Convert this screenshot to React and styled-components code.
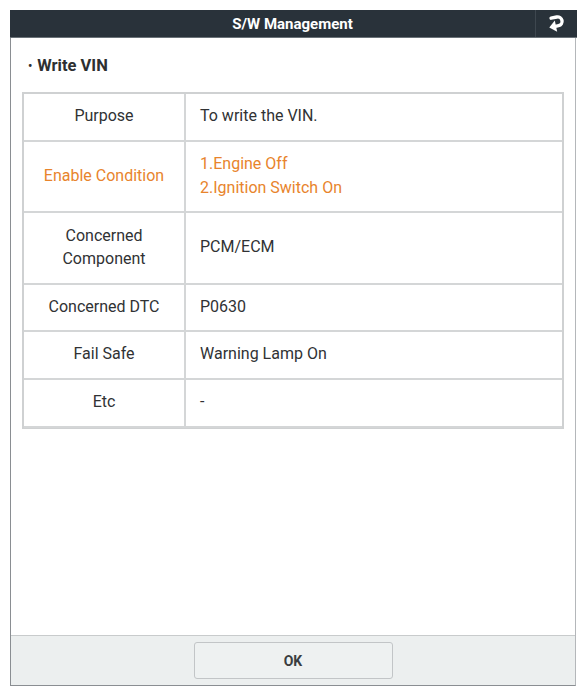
import React from "react";
import styled, { createGlobalStyle } from "styled-components";

const Global = createGlobalStyle`
  html, body { margin: 0; padding: 0; background: #ffffff; }
  body { font-family: Roboto, "Noto Sans", "Liberation Sans", sans-serif; }
`;

const Page = styled.div`
  padding: 10px 0 0 10px;
`;

const Frame = styled.div`
  width: 566px;
  height: 676px;
  box-sizing: border-box;
  display: flex;
  flex-direction: column;
  border-left: 1.5px solid #8a8e92;
  border-right: 1.5px solid #b4b7ba;
  border-bottom: 1.5px solid #8a8e92;
  background: #fff;
`;

const Header = styled.div`
  height: 27px;
  margin: 0 -1.5px;
  background: #29323a;
  display: flex;
  align-items: stretch;
  border-bottom: 1px solid #6a7278;
`;

const Title = styled.div`
  flex: 1;
  display: flex;
  align-items: center;
  justify-content: center;
  padding-left: 41px;
  color: #ffffff;
  font-weight: 700;
  font-size: 15px;
`;

const BackButton = styled.div`
  width: 41px;
  border-left: 1px solid #3e474f;
  display: flex;
  align-items: center;
  justify-content: center;
`;

const Body = styled.div`
  flex: 1;
  padding: 0 11px;
`;

const Section = styled.div`
  height: 54px;
  display: flex;
  align-items: center;
  gap: 5px;
  padding-left: 6px;
  padding-top: 1px;
  box-sizing: border-box;
  color: #2d2f31;
  font-weight: 700;
  font-size: 16.5px;
`;

const Bullet = styled.span`
  font-size: 12px;
`;

const Table = styled.div`
  display: grid;
  grid-template-columns: 162px 1fr;
  border: 2px solid #cfd1d2;
  border-bottom-width: 1px;
  border-right-width: 2px;
`;

const Cell = styled.div`
  min-height: ${(p) => p.$h}px;
  box-sizing: border-box;
  display: flex;
  flex-direction: column;
  justify-content: center;
  align-items: ${(p) => (p.$label ? "center" : "flex-start")};
  text-align: ${(p) => (p.$label ? "center" : "left")};
  padding: ${(p) => (p.$label ? "0 6px 2px" : "0 14px 2px")};
  border-bottom: 2px solid #d4d6d7;
  border-right: ${(p) => (p.$label ? "2px solid #d4d6d7" : "none")};
  color: ${(p) => (p.$accent ? "#e8842c" : "#303234")};
  font-size: 16px;
  line-height: 23.5px;
`;

const Footer = styled.div`
  height: 50px;
  box-sizing: border-box;
  background: #ecefef;
  border-top: 1.5px solid #c8cbcc;
  display: flex;
  align-items: center;
  justify-content: center;
`;

const OkButton = styled.button`
  width: 199px;
  height: 37px;
  background: #eef1f1;
  border: 1.5px solid #c2c5c7;
  border-radius: 3px;
  font-family: Roboto, "Liberation Sans", sans-serif;
  font-weight: 700;
  font-size: 14px;
  color: #3a3d40;
`;

const rows = [
  { label: ["Purpose"], value: ["To write the VIN."], h: 48 },
  { label: ["Enable Condition"], value: ["1.Engine Off", "2.Ignition Switch On"], h: 71, accent: true },
  { label: ["Concerned", "Component"], value: ["PCM/ECM"], h: 72 },
  { label: ["Concerned DTC"], value: ["P0630"], h: 47 },
  { label: ["Fail Safe"], value: ["Warning Lamp On"], h: 48 },
  { label: ["Etc"], value: ["-"], h: 48 },
];

const ReturnIcon = () => (
  <svg width="19" height="19" viewBox="0 0 18 18" style={{ transform: "rotate(-12deg)" }}>
    <path
      d="M5 3 H10.5 a4.2 4.2 0 0 1 0 8.4 H7.5"
      fill="none"
      stroke="#ffffff"
      strokeWidth="3.2"
      strokeLinecap="round"
    />
    <polygon points="1.5,11.4 8,6 8,16.8" fill="#ffffff" />
  </svg>
);

export default function App() {
  return (
    <>
      <Global />
      <Page>
        <Frame>
          <Header>
            <Title>S/W Management</Title>
            <BackButton>
              <ReturnIcon />
            </BackButton>
          </Header>
          <Body>
            <Section>
              <Bullet>•</Bullet>
              <span>Write VIN</span>
            </Section>
            <Table>
              {rows.map((r, i) => (
                <React.Fragment key={i}>
                  <Cell $label $h={r.h} $accent={r.accent}>
                    {r.label.map((t, j) => (
                      <span key={j}>{t}</span>
                    ))}
                  </Cell>
                  <Cell $h={r.h} $accent={r.accent}>
                    {r.value.map((t, j) => (
                      <span key={j}>{t}</span>
                    ))}
                  </Cell>
                </React.Fragment>
              ))}
            </Table>
          </Body>
          <Footer>
            <OkButton>OK</OkButton>
          </Footer>
        </Frame>
      </Page>
    </>
  );
}
